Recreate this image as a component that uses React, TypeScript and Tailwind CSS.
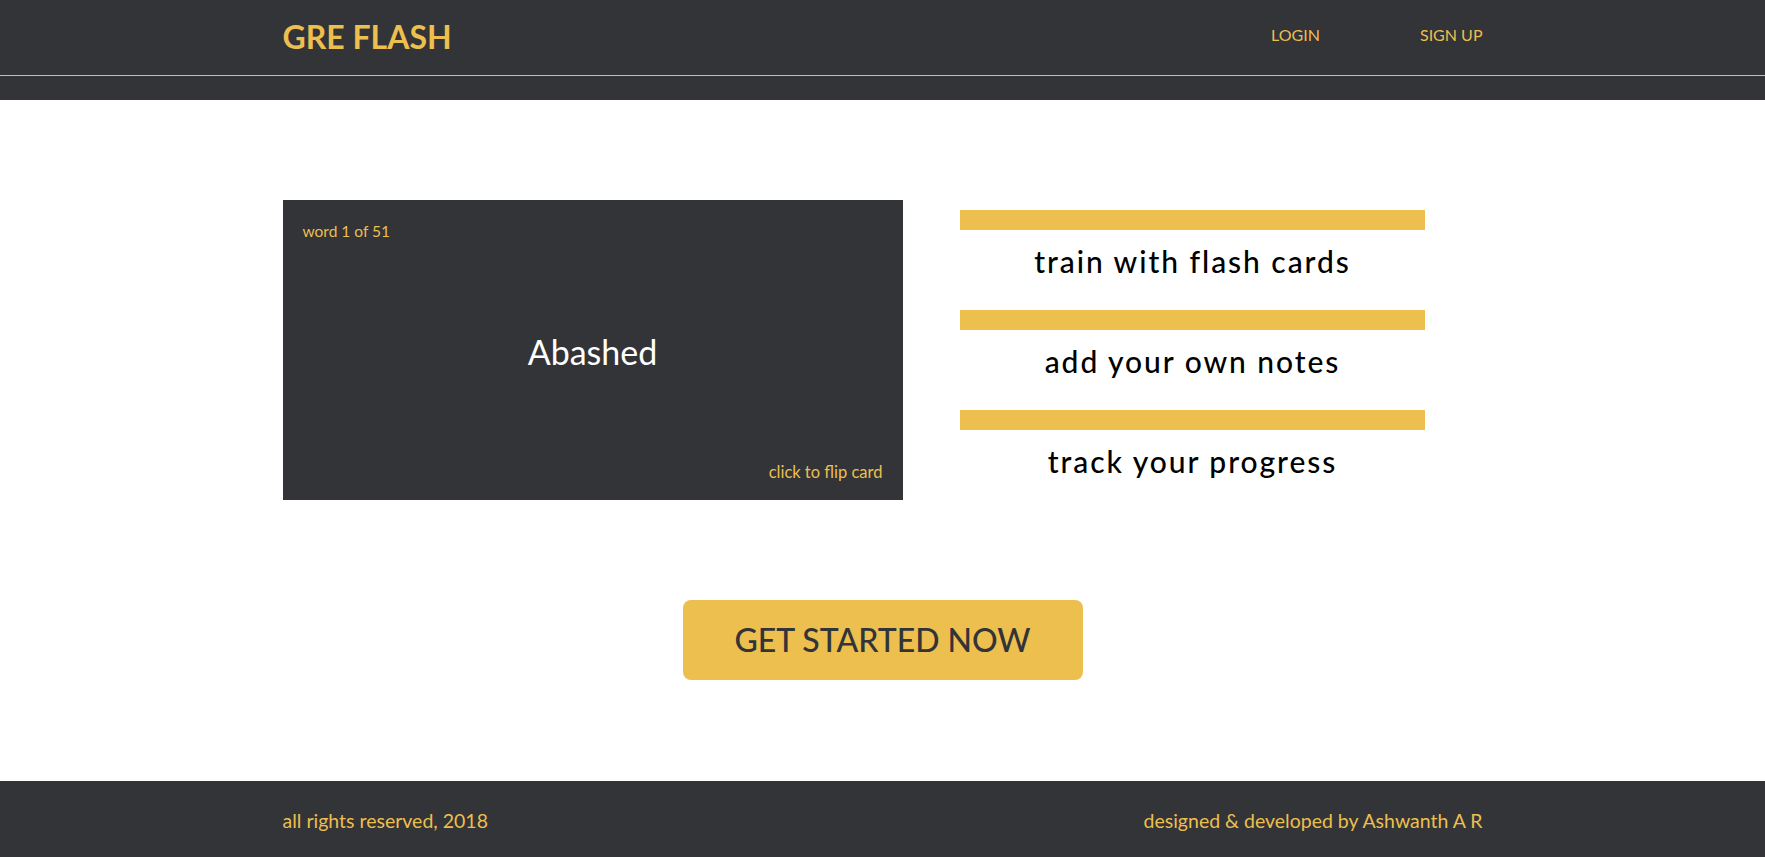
const features = ["train with flash cards", "add your own notes", "track your progress"];

export default function App() {
  return (
    <div className="min-h-screen flex flex-col bg-white font-['Lato','Noto_Sans',sans-serif]">
      {/* header */}
      <header className="bg-[#333437]">
        <div className="h-[76px] border-b border-[#ecbf4f]">
          <div className="w-[1200px] mx-auto h-full flex items-center justify-between">
            <div className="text-[32px] font-bold text-[#ecbf4f] mb-[2px]">GRE FLASH</div>
            <nav className="flex items-center gap-[100px] text-[16px] text-[#ecbf4f] mb-[5px]">
              <a href="#">LOGIN</a>
              <a href="#">SIGN UP</a>
            </nav>
          </div>
        </div>
        <div className="h-[24px]" />
      </header>

      {/* main */}
      <main className="flex-1">
        <div className="w-[1200px] mx-auto pt-[100px] pb-[100px]">
          <div className="flex h-[300px]">
            <div className="w-[620px] h-[300px] bg-[#333437] flex flex-col justify-between p-5 cursor-pointer">
              <div className="text-[15.5px] text-[#ecbf4f] leading-none mt-1">word 1 of 51</div>
              <div className="text-center text-white text-[34px] leading-none">Abashed</div>
              <div className="text-right text-[16.5px] text-[#ecbf4f] leading-none">click to flip card</div>
            </div>
            <div className="flex-1 flex justify-center pt-[10px]">
              <div className="w-[465px]">
                {features.map((f) => (
                  <div key={f} className="h-[100px] last:h-[90px]">
                    <div className="h-5 bg-[#ecbf4f]" />
                    <div className="mt-[11px] leading-[40px] text-[30px] tracking-[0.065em] font-medium text-black text-center">
                      {f}
                    </div>
                  </div>
                ))}
              </div>
            </div>
          </div>

          <div className="flex justify-center mt-[100px]">
            <button className="w-[400px] h-[80px] rounded-lg bg-[#ecbf4f] text-[#333437] text-[32px] font-medium">
              GET STARTED NOW
            </button>
          </div>
        </div>
      </main>

      {/* footer */}
      <footer className="bg-[#333437] h-[76px]">
        <div className="w-[1200px] mx-auto h-full flex items-center justify-between pt-[4px] text-[19.5px] text-[#ecbf4f]">
          <span>all rights reserved, 2018</span>
          <span>designed &amp; developed by Ashwanth A R</span>
        </div>
      </footer>
    </div>
  );
}
